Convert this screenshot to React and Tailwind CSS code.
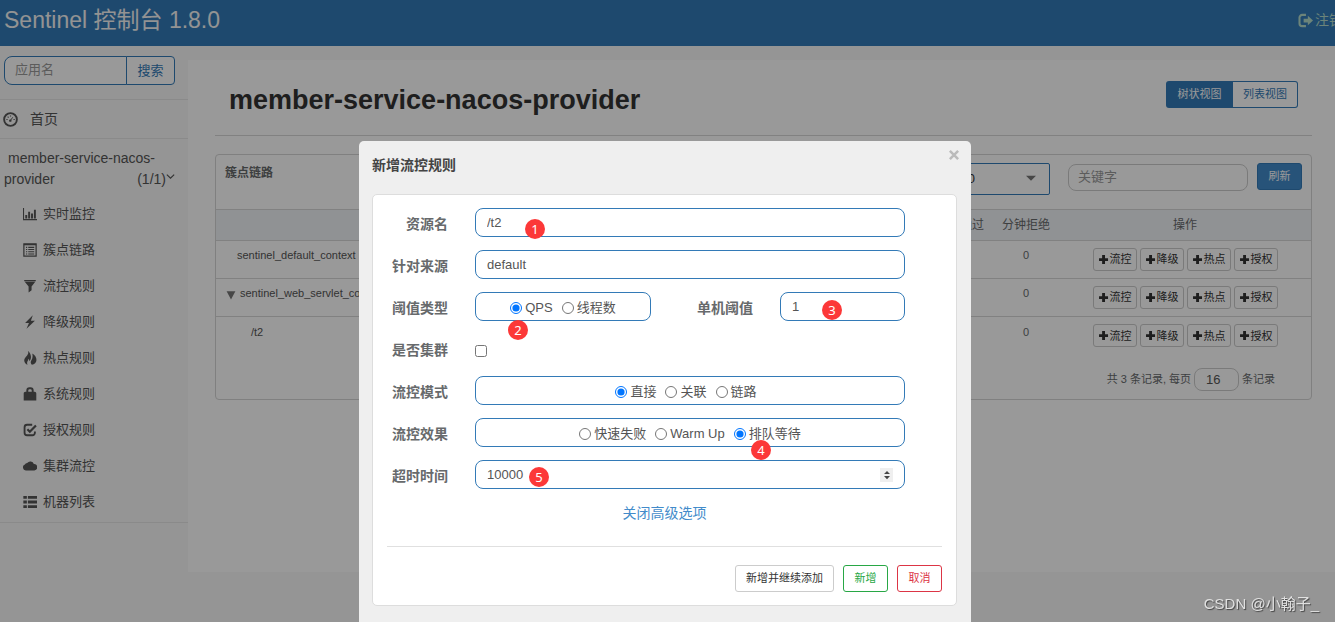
const ICONS = {
  logout: (
    <>
      <path d="M8.500 2H4.500A2.900 2.900 0 0 0 1.600 4.900v6.200A2.900 2.900 0 0 0 4.500 14h4" fill="none" stroke="currentColor" strokeWidth="2.200" />
      <path d="M10.500 3v3H6v4h4.500v3L16 8z" fill="currentColor" />
    </>
  ),
  dashboard: (
    <>
      <circle cx="8" cy="8" r="6.8" fill="none" stroke="currentColor" strokeWidth="2" />
      <circle cx="7.8" cy="9.2" r="1.3" fill="currentColor" />
      <path d="M7.800 9.200l2.600-3.600" stroke="currentColor" strokeWidth="1" />
      <path d="M3.600 8h1.300M5 5l.9.900M8 3.600v1.200M11.200 8h1.300" stroke="currentColor" strokeWidth="1.200" />
    </>
  ),
  stats: (
    <>
      <path d="M.6 1v13.400H16" fill="none" stroke="currentColor" strokeWidth="1.200" />
      <path d="M2.600 9h2.200v4.200H2.600zM5.900 5.400h2.200v7.800H5.900zM9.200 7.400h2.200v5.800H9.200zM12.500 3h2.200v10.200h-2.200z" fill="currentColor" />
    </>
  ),
  listAlt: (
    <>
      <path d="M1 1h14v14H1z" fill="none" stroke="currentColor" strokeWidth="1.400" />
      <path d="M1 1h14v1.600H1z" fill="currentColor" />
      <path d="M3.400 5h1.400M6 5h6.800M3.400 7.500h1.400M6 7.500h6.800M3.400 10h1.400M6 10h6.800M3.400 12.500h1.400M6 12.500h6.800" stroke="currentColor" strokeWidth="1.200" />
    </>
  ),
  filter: <path d="M1.400 1h13.200v1.600H1.400zM2 3.200h12L9.800 8.600v4.200L6.400 15.400V8.600z" fill="currentColor" />,
  flash: <path d="M11.200.4L2.400 9h4.400L4 15.800 13.600 6.600H9z" fill="currentColor" />,
  fire: (
    <path d="M5.600 0c.9 2.200.4 3.400-.9 5C3 7 1.200 8.500 1.400 11c.2 2.200 1.800 3.900 3.800 4.700-.8-1.600-.6-3 .2-4.300.5-.8.8-1.700.7-2.600 1 .6 1.300 1.900 1 3C8.200 11 9.300 9.200 9.100 6.600 8.900 3.800 7.700 1.400 5.600 0zM10.600 2.800c.7 2.600.4 5.200-.7 7.200-.7 1.300-1.200 2.400-1 3.500.1.900.5 1.700 1.200 2.300 3.100-.6 5.200-2.700 5.300-5.500.1-3-1.900-5.900-4.800-7.500z" fill="currentColor" />
  ),
  lock: <path d="M3.800 5.400V4A3.600 3.600 0 0 1 7.400.4h1.200A3.600 3.600 0 0 1 12.200 4v1.400h1c1.200 0 2 .8 2 2v8H.8v-8c0-1.200.8-2 2-2zm2.200 0h4V4.200A1.600 1.600 0 0 0 8.400 2.600h-.8A1.600 1.600 0 0 0 6 4.200z" fill="currentColor" />,
  check: (
    <>
      <path d="M10.500 2H4.600A2.800 2.800 0 0 0 1.800 4.800v6.400A2.800 2.800 0 0 0 4.600 14h6.200a2.800 2.800 0 0 0 2.800-2.800V9.600" fill="none" stroke="currentColor" strokeWidth="2.100" />
      <path d="M5 7.200l2.800 2.800 7-7.200" fill="none" stroke="currentColor" strokeWidth="2.500" />
    </>
  ),
  cloud: <path d="M3.200 13A3.400 3.400 0 0 1 2.200 6.400 2.700 2.700 0 0 1 4.800 4.600 4.300 4.300 0 0 1 12.400 5.800a3.600 3.600 0 0 1 .6 7.200z" fill="currentColor" />,
  list: <path d="M.4 1.200h4v3.200h-4zM5.600 1.200H16v3.200H5.600zM.4 6.400h4v3.200h-4zM5.600 6.400H16v3.200H5.600zM.4 11.600h4v3.200h-4zM5.600 11.600H16v3.200H5.600z" fill="currentColor" />,
  chevron: <path d="M1.500 4.500L8 11l6.500-6.500" fill="none" stroke="currentColor" strokeWidth="2" />,
  plus: <path d="M6 1.500h4.200V6h4.400v4.200h-4.400v4.400H6v-4.400H1.500V6H6z" fill="currentColor" />,
  caret: <path d="M0 4.500h16L8 12.500z" fill="currentColor" />,
  triangle: <path d="M1 2h14L8 15z" fill="currentColor" />,
  spinner: <path d="M8 2.500l4 4.200H4zM8 13.500l4-4.200H4z" fill="currentColor" />,
  close: <path d="M2.500 2.500l11 11M13.500 2.500l-11 11" stroke="currentColor" strokeWidth="3.400" />,
};

function Icon({ name, className = "size-[14px]" }) {
  return (
    <svg viewBox="0 0 16 16" aria-hidden="true" className={`shrink-0 ${className}`}>
      {ICONS[name]}
    </svg>
  );
}

const MENU = [
  ["stats", "实时监控"],
  ["listAlt", "簇点链路"],
  ["filter", "流控规则"],
  ["flash", "降级规则"],
  ["fire", "热点规则"],
  ["lock", "系统规则"],
  ["check", "授权规则"],
  ["cloud", "集群流控"],
  ["list", "机器列表"],
];

function Header() {
  return (
    <header className="flex h-[46px] items-center justify-between overflow-hidden bg-[#337ab7] pb-[6px] pl-1">
      <a href="#home" className="text-[23px] leading-8 text-[#f5f5f5]">Sentinel 控制台 1.8.0</a>
      <a href="#logout" className="-mr-1 flex w-[41px] items-center gap-[2px] text-[14px] leading-5 whitespace-nowrap text-[#b4dccb]">
        <Icon name="logout" className="size-[15px]" />
        注销
      </a>
    </header>
  );
}

function Sidebar() {
  return (
    <aside className="w-[188px] shrink-0 text-[#555]">
      <form className="flex px-1 pt-[10px] pb-[14px] text-[13px]">
        <input
          aria-label="应用名"
          placeholder="应用名"
          className="h-[29px] w-[123px] rounded-l-[8px] border border-[#337ab7] bg-white px-[10px] pb-[2px] placeholder:text-[#999]"
        />
        <button type="button" className="-ml-px h-[29px] w-[49px] rounded-r-[4px] border border-[#337ab7] bg-white text-[#337ab7]">
          搜索
        </button>
      </form>
      <nav className="border-y border-[#e7e7e7]">
        <a href="#dashboard" className="flex h-[38px] items-center gap-3 pl-[3px] text-[14px]">
          <Icon name="dashboard" className="size-[15px]" />
          首页
        </a>
        <div className="border-t border-[#e7e7e7] pt-[9px]">
          <a href="#app" className="block px-1 text-[14px] leading-[21px]">
            <span className="block pl-1">member-service-nacos-</span>
            <span className="flex justify-between pr-[9px]">
              provider
              <span className="flex items-start">
                (1/1)
                <Icon name="chevron" className="mt-[3px] size-[9px]" />
              </span>
            </span>
          </a>
          <ul className="pt-[6px] pb-[2px]">
            {MENU.map(([icon, label]) => (
              <li key={label}>
                <a href={`#${icon}`} className="flex h-9 items-center gap-[6px] pl-[23px] text-[13px]">
                  <Icon name={icon} />
                  {label}
                </a>
              </li>
            ))}
          </ul>
        </div>
      </nav>
    </aside>
  );
}

const COLUMNS = ["通过QPS", "拒绝QPS", "线程数", "平均RT", "分钟通过", "分钟拒绝"];
const ROWS = [
  { name: "sentinel_default_context", pad: "pl-[21px]" },
  { name: "sentinel_web_servlet_context", pad: "pl-[10px]", open: true },
  { name: "/t2", pad: "pl-[35px]" },
];

function ResourceTable() {
  return (
    <table className="w-full table-fixed text-[11px] text-[#676a6c]">
      <thead>
        <tr className="h-[31px] border-y border-[#d8d8d8] bg-[#f1f4f7] text-[12px]">
          <th aria-label="资源名" />
          {COLUMNS.map((c) => (
            <th key={c} className="w-[66px] font-normal whitespace-nowrap">{c}</th>
          ))}
          <th className="w-[252px] font-normal">操作</th>
        </tr>
      </thead>
      <tbody>
        {ROWS.map((r) => (
          <tr key={r.name} className="h-[38px] border-b border-[#d8d8d8] last:border-b-0">
            <td className={`pb-2 text-[#555] ${r.pad}`}>
              <span className="flex items-center gap-1">
                {r.open && <Icon name="triangle" className="mt-[2px] size-[10px] text-[#777]" />}
                {r.name}
              </span>
            </td>
            {COLUMNS.map((c) => (
              <td key={c} className="pb-2 text-center">0</td>
            ))}
            <td>
              <div className="flex justify-center gap-[3px]">
                {["流控", "降级", "热点", "授权"].map((a) => (
                  <button key={a} type="button" className="flex h-[23px] items-center gap-px rounded-[3px] border border-[#ccc] bg-white px-1 text-[#333]">
                    <Icon name="plus" className="size-[11px]" />
                    {a}
                  </button>
                ))}
              </div>
            </td>
          </tr>
        ))}
      </tbody>
    </table>
  );
}

function Content() {
  return (
    <main className="mt-[14px] h-[512px] min-w-0 flex-1 bg-white pr-[23px] pl-[27px]">
      <div className="flex items-start justify-between border-b border-[#d8d8d8] pt-[21px] pr-[14px] pb-[17px] pl-[14px]">
        <h1 className="pt-px text-[27px] leading-9 font-bold text-[#333]">member-service-nacos-provider</h1>
        <div className="flex text-[11px]">
          <button type="button" className="h-[27px] w-[67px] rounded-l-[3px] bg-[#337ab7] text-white">树状视图</button>
          <button type="button" className="h-[27px] w-[65px] rounded-r-[3px] border border-l-0 border-[#337ab7] bg-white text-[#337ab7]">列表视图</button>
        </div>
      </div>
      <section className="mt-[18px] rounded-[4px] border border-[#d5d5d5]">
        <div className="flex h-[54px] items-start justify-between pt-2 pr-[9px] pl-[9px]">
          <h2 className="text-[12px] leading-5 font-bold text-[#676a6c]">簇点链路</h2>
          <div className="flex items-start">
            <div className="relative mr-[18px]">
              <select aria-label="机器" className="h-8 w-[250px] appearance-none rounded-[2px] border border-[#337ab7] bg-white pr-[74px] text-right text-[13px] text-[#333]">
                <option>192.168.1.3:8720</option>
              </select>
              <Icon name="caret" className="absolute top-[10px] right-[14px] size-[10px] text-[#777]" />
            </div>
            <input aria-label="关键字" placeholder="关键字" className="mt-px mr-[9px] h-[27px] w-[180px] rounded-[8px] border border-[#ccc] bg-white px-[9px] pb-[2px] text-[13px] placeholder:text-[#999]" />
            <button type="button" className="h-[27px] w-[45px] rounded-[3px] border border-[#337ab7] bg-[#428bca] text-[11px] text-white">刷新</button>
          </div>
        </div>
        <ResourceTable />
        <div className="flex items-center justify-end gap-[3px] pt-[13px] pr-9 pb-2 text-[11px] text-[#676a6c]">
          <label htmlFor="page-size">共 3 条记录, 每页</label>
          <input id="page-size" defaultValue="16" className="h-[23px] w-[45px] rounded-[8px] border border-[#ccc] bg-white pl-[11px] text-[13px] text-[#555]" />
          <span>条记录</span>
        </div>
      </section>
    </main>
  );
}

function Marker({ n, className }) {
  return (
    <span className={`absolute flex size-5 items-center justify-center rounded-full bg-[#fc3838] text-[13px] leading-5 text-white ${className}`} style={{ fontFamily: '"Noto Sans", sans-serif' }}>
      {n}
    </span>
  );
}

function Row({ label, htmlFor, children }) {
  return (
    <div className="flex h-[29px] items-center gap-[27px]">
      {htmlFor ? (
        <label htmlFor={htmlFor} className="w-[61px] shrink-0 pt-[3px] text-right text-[14px] leading-5 font-bold text-[#676a6c]">{label}</label>
      ) : (
        <span className="w-[61px] shrink-0 pt-[3px] text-right text-[14px] leading-5 font-bold text-[#676a6c]">{label}</span>
      )}
      <div className="relative flex flex-1 items-center">{children}</div>
    </div>
  );
}

const FIELD = "h-[29px] rounded-[8px] border border-[#337ab7] bg-white px-[11px] text-[13px] text-[#555]";

function Radios({ name, options, value, className = "w-full" }) {
  return (
    <div role="radiogroup" className={`flex h-[29px] items-center justify-center gap-[9px] rounded-[8px] border border-[#337ab7] pt-[2px] text-[13px] text-[#555] ${className}`}>
      {options.map((o) => (
        <label key={o} className="flex items-center gap-[3px] whitespace-nowrap">
          <input type="radio" name={name} defaultChecked={o === value} className="size-3" />
          {o}
        </label>
      ))}
    </div>
  );
}

function Dialog() {
  return (
    <div className="fixed inset-0 overflow-hidden bg-black/40 pt-[141px] pr-[5px]">
      <div role="dialog" aria-labelledby="dialog-title" className="relative mx-auto w-[612px] rounded-[5px] bg-[#efefef] pt-[14px] pr-[14px] pb-10 pl-[13px]">
        <button type="button" aria-label="关闭" className="absolute top-2 right-[11px] text-[#bbb]">
          <Icon name="close" className="size-[12px]" />
        </button>
        <h2 id="dialog-title" className="text-[14px] leading-5 font-bold text-[#444]">新增流控规则</h2>
        <div className="mt-[19px] rounded-[5px] border border-[#ddd] bg-white px-[14px] py-[13px]">
          <form className="flex flex-col gap-[13px] pr-[37px]">
            <Row label="资源名" htmlFor="resource">
              <input id="resource" defaultValue="/t2" className={`${FIELD} w-full`} />
              <Marker n="1" className="top-[11px] left-[50px]" />
            </Row>
            <Row label="针对来源" htmlFor="origin">
              <input id="origin" defaultValue="default" className={`${FIELD} w-full`} />
            </Row>
            <Row label="阈值类型">
              <Radios name="grade" options={["QPS", "线程数"]} value="QPS" className="w-[176px]" />
              <label htmlFor="count" className="ml-[46px] pt-[3px] text-[14px] leading-5 font-bold text-[#676a6c]">单机阈值</label>
              <input id="count" defaultValue="1" className={`${FIELD} ml-auto w-[125px]`} />
              <Marker n="2" className="top-[28px] left-[33px]" />
              <Marker n="3" className="top-[8px] right-[63px]" />
            </Row>
            <Row label="是否集群" htmlFor="cluster">
              <input id="cluster" type="checkbox" className="mt-[5px] size-3" />
            </Row>
            <Row label="流控模式">
              <Radios name="strategy" options={["直接", "关联", "链路"]} value="直接" className="w-full pr-2" />
            </Row>
            <Row label="流控效果">
              <Radios name="behavior" options={["快速失败", "Warm Up", "排队等待"]} value="排队等待" />
              <Marker n="4" className="top-[22px] left-[276px]" />
            </Row>
            <Row label="超时时间" htmlFor="timeout">
              <input id="timeout" type="number" defaultValue="10000" className={`${FIELD} w-full [appearance:textfield]`} />
              <span aria-hidden="true" className="absolute top-2 right-3 flex h-[14px] w-[13px] items-center justify-center bg-[#efefef] text-[#444]">
                <Icon name="spinner" className="size-[12px]" />
              </span>
              <Marker n="5" className="top-[7px] left-[54px]" />
            </Row>
          </form>
          <div className="pt-[14px] pb-[23px] text-center text-[14px] leading-5">
            <a href="#advanced" className="text-[#428bca]">关闭高级选项</a>
          </div>
          <div className="flex justify-end gap-[9px] border-t border-[#e0e0e0] pt-[18px] text-[11px]">
            <button type="button" className="h-[27px] rounded-[3px] border border-[#ccc] px-[10px] text-[#333]">新增并继续添加</button>
            <button type="button" className="h-[27px] w-[45px] rounded-[3px] border border-[#28a745] text-[#28a745]">新增</button>
            <button type="button" className="h-[27px] w-[45px] rounded-[3px] border border-[#dc3545] text-[#dc3545]">取消</button>
          </div>
        </div>
      </div>
      <p className="absolute right-4 bottom-2 text-[15px] leading-5 text-[#e0e0e0] [text-shadow:1px_1px_1px_#444]">CSDN @小翰子_</p>
    </div>
  );
}

export default function App() {
  return (
    <div className="min-h-screen overflow-hidden bg-[#f8f8f8]" style={{ fontFamily: '"Liberation Sans", "Noto Sans CJK SC", sans-serif' }}>
      <Header />
      <div className="flex items-start">
        <Sidebar />
        <Content />
      </div>
      <Dialog />
    </div>
  );
}
